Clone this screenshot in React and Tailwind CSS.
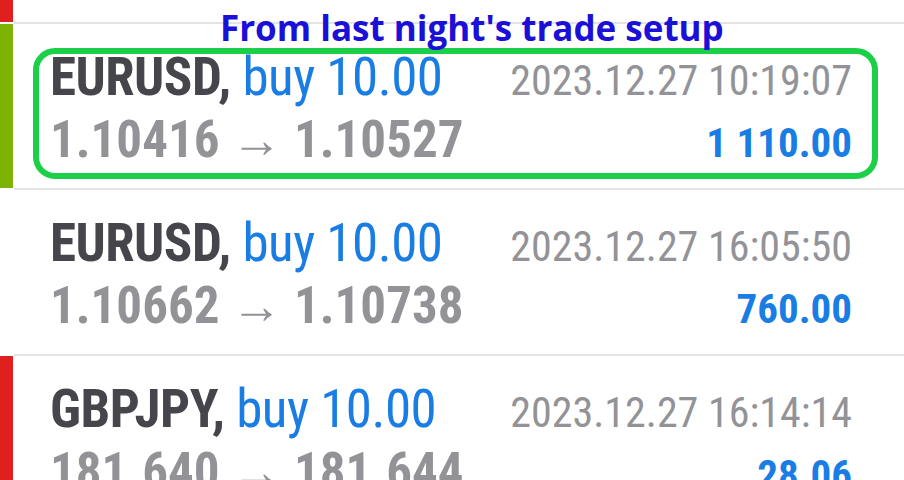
import React from 'react';

const trades = [
  { bar: 'bg-[#7cb305]', pair: 'EURUSD', lots: 'buy 10.00', time: '2023.12.27 10:19:07', open: '1.10416', close: '1.10527', profit: '1 110.00' },
  { bar: 'bg-white', pair: 'EURUSD', lots: 'buy 10.00', time: '2023.12.27 16:05:50', open: '1.10662', close: '1.10738', profit: '760.00' },
  { bar: 'bg-[#e0201e]', pair: 'GBPJPY', lots: 'buy 10.00', time: '2023.12.27 16:14:14', open: '181.640', close: '181.644', profit: '28.06' },
];

const Separator = () => <div className="ml-[14px] h-[2px] bg-[#e4e4e4]" />;

const TradeRow = ({ t }) => (
  <div className="flex h-[164px]">
    <div className={`w-[13px] shrink-0 ${t.bar}`} />
    <div className="flex-1 pl-[37px] pr-[52px] pt-[23px]">
      <div className="flex items-baseline justify-between leading-[60px]">
        <div className="text-[53px] tracking-[-0.5px]">
          <span className="font-bold text-[#46454b]">{t.pair},</span>{' '}
          <span className="text-[#1a7de3]">{t.lots}</span>
        </div>
        <div className="text-[42px] text-[#939397]">{t.time}</div>
      </div>
      <div className="flex items-baseline justify-between leading-[58px]">
        <div className="text-[51px] font-bold text-[#939397]">
          {t.open} <span className="font-normal">→</span> {t.close}
        </div>
        <div className="text-[41px] font-bold text-[#1a7de3]">{t.profit}</div>
      </div>
    </div>
  </div>
);

export default function App() {
  return (
    <div
      className="relative w-[904px] h-[480px] overflow-hidden bg-white"
      style={{ fontFamily: '"Roboto Condensed", "Liberation Sans Narrow", Roboto, sans-serif' }}
    >
      <div className="flex h-[22px]">
        <div className="w-[13px] bg-[#e0201e]" />
      </div>
      <Separator />
      {trades.map((t, i) => (
        <React.Fragment key={i}>
          <TradeRow t={t} />
          <Separator />
        </React.Fragment>
      ))}

      <div className="absolute left-[33px] top-[48px] w-[845px] h-[131px] rounded-[22px] border-[6px] border-[#1ccf48]" />
      <div
        className="absolute left-[220px] top-[5px] text-[35px] font-bold leading-[46px] text-[#1a10d8] whitespace-nowrap"
        style={{ fontFamily: '"Open Sans", sans-serif' }}
      >
        From last night's trade setup
      </div>
    </div>
  );
}
